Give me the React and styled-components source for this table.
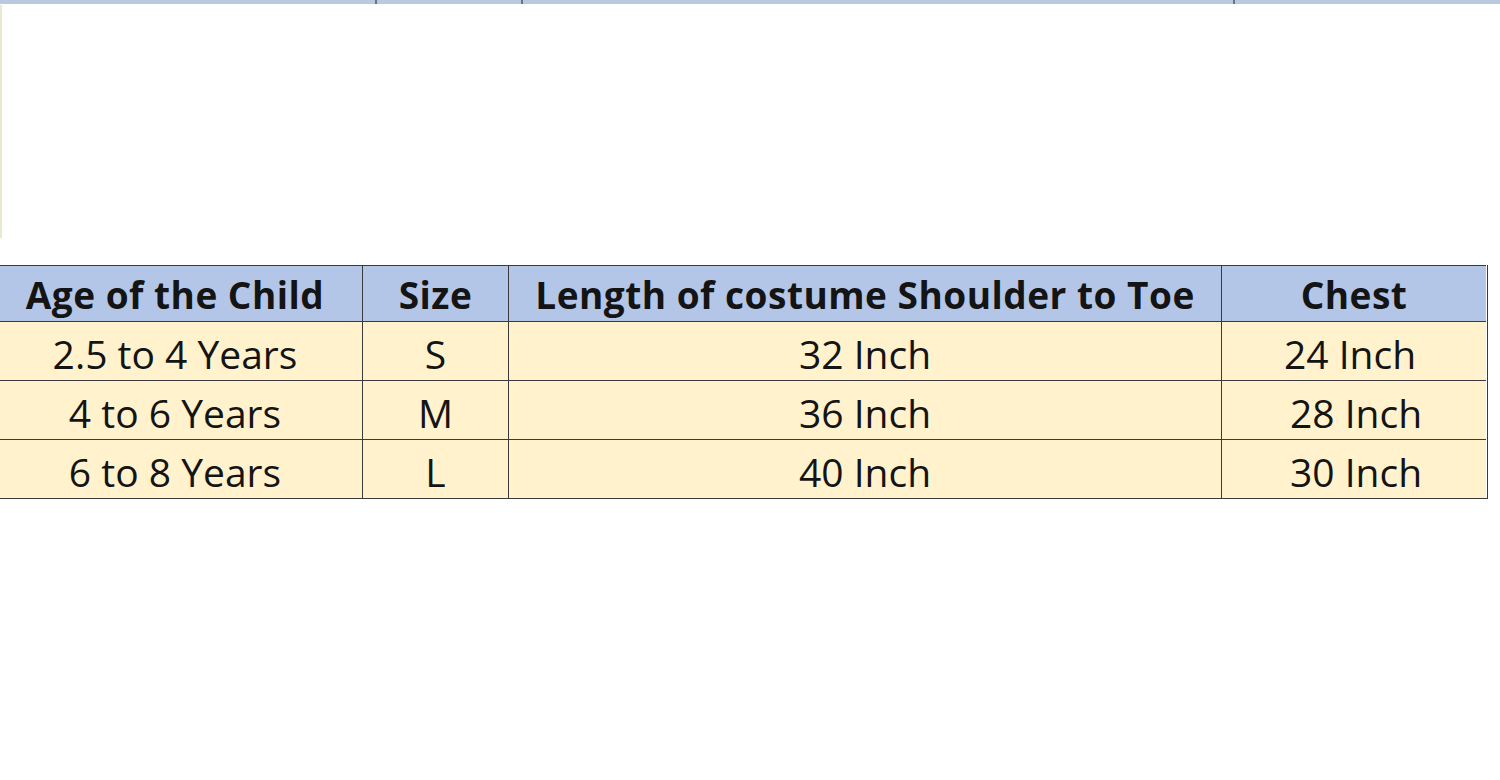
import React from 'react';
import styled, { createGlobalStyle } from 'styled-components';

const GlobalStyle = createGlobalStyle`
  html, body {
    margin: 0;
    padding: 0;
    background: #ffffff;
  }
  body {
    font-family: "Open Sans", Lato, sans-serif;
  }
`;

const Page = styled.div`
  width: 1500px;
  height: 780px;
  background: #fff;
  display: flex;
  flex-direction: column;
  overflow: hidden;
`;

const TopStrip = styled.div`
  height: 4px;
  display: grid;
  grid-template-columns: 375px 146px 712px 1fr;
  background: #b9c9de;
`;

const StripCell = styled.div`
  border-left: ${(p) => (p.first ? 'none' : '2px solid #6b7384')};
`;

const Blank = styled.div`
  height: 261px;
  display: flex;
`;

const EdgeLine = styled.div`
  width: 2px;
  height: 233px;
  margin-top: 1px;
  background: #ebe8d2;
`;

const Table = styled.div`
  display: grid;
  grid-template-columns: 362px 146px 713px 265px;
  width: 1487px;
  border-right: 1px solid #3a3a3a;
  border-bottom: 1px solid #3a3a3a;
`;

const Cell = styled.div`
  height: ${(p) => (p.head ? '56px' : '59px')};
  box-sizing: border-box;
  border-top: 1px solid #3a3a3a;
  border-left: ${(p) => (p.first ? 'none' : '1px solid #3a3a3a')};
  background: ${(p) => (p.head ? '#b4c6e7' : '#fff2cc')};
  display: flex;
  align-items: center;
  justify-content: center;
  padding-top: ${(p) => (p.head ? '2px' : '4px')};
  padding-left: ${(p) => Math.max(p.shift || 0, 0) * 2}px;
  padding-right: ${(p) => Math.max(-(p.shift || 0), 0) * 2}px;
  font-family: "Open Sans", Lato, sans-serif;
  font-size: ${(p) => (p.head ? '37px' : '39px')};
  letter-spacing: ${(p) => (p.head ? '0.5px' : '0')};
  font-weight: ${(p) => (p.head ? 700 : 400)};
  color: #141414;
  white-space: nowrap;
`;

const headers = ['Age of the Child', 'Size', 'Length of costume Shoulder to Toe', 'Chest'];

const rows = [
  { cells: ['2.5 to 4 Years', 'S', '32 Inch', '24 Inch'], chest: -4 },
  { cells: ['4 to 6 Years', 'M', '36 Inch', '28 Inch'], chest: 2 },
  { cells: ['6 to 8 Years', 'L', '40 Inch', '30 Inch'], chest: 2 },
];

export default function App() {
  return (
    <Page>
      <GlobalStyle />
      <TopStrip>
        <StripCell first />
        <StripCell />
        <StripCell />
        <StripCell />
      </TopStrip>
      <Blank>
        <EdgeLine />
      </Blank>
      <Table>
        {headers.map((h, i) => (
          <Cell head first={i === 0} key={h} shift={i === 0 ? -6 : 0}>
            {h}
          </Cell>
        ))}
        {rows.map((r) =>
          r.cells.map((c, i) => (
            <Cell
              first={i === 0}
              key={r.cells[0] + i}
              shift={i === 0 ? -6 : i === 3 ? r.chest : 0}
            >
              {c}
            </Cell>
          ))
        )}
      </Table>
    </Page>
  );
}
